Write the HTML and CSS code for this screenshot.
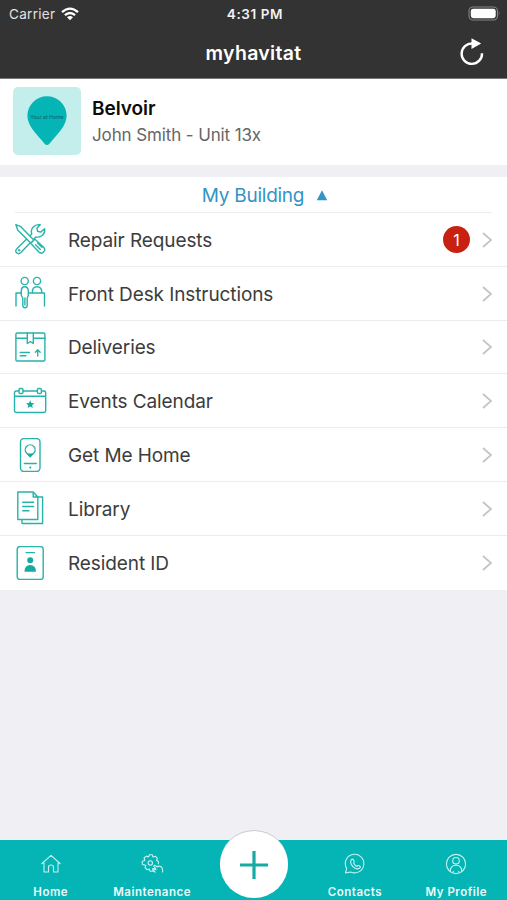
FILE: index.html
```html
<!DOCTYPE html>
<html lang="en">
<head>
<meta charset="utf-8">
<title>myhavitat</title>
<link rel="stylesheet" href="styles.css">
</head>
<body>
<div class="app">
  <header class="header">
    <div class="status">
      <div class="carrier"><span>Carrier</span>
        <svg class="wifi" width="18" height="14" viewBox="0 0 18 14"><g fill="none" stroke="#fff" stroke-width="2.3"><path d="M1 5.2Q9-2 17 5.2"/><path d="M3.9 8.2Q9 3.7 14.1 8.2"/></g><path fill="#fff" d="M6 10.2Q9 7.7 12 10.2L9 13.2Z"/></svg>
      </div>
      <span class="time">4:31 PM</span>
      <svg class="battery" width="33" height="16" viewBox="0 0 33 16"><rect x="1" y="1" width="28.5" height="13" rx="4" fill="none" stroke="#858585" stroke-width="1.1"/><rect x="2.8" y="2.8" width="24.9" height="9.4" rx="2.4" fill="#fff"/><path d="M30.8 5.3q1.7 2.2 0 4.4z" fill="#858585"/></svg>
    </div>
    <div class="titlebar">
      <h1>myhavitat</h1>
      <svg class="refresh" width="26" height="30" viewBox="0 0 26 30"><path d="M13.5 5.500A10.200 10.200 0 1 0 23 15.200" fill="none" stroke="#fff" stroke-width="2.400"/><path d="M12.500.2 22.200 5.500 12.500 11z" fill="#fff"/></svg>
    </div>
  </header>

  <section class="profile">
    <div class="avatar">
      <svg width="40" height="50" viewBox="0 0 40 50"><path d="M20 49C18.500 49 16.800 47 14.500 44 8 36.500.4 29 .4 19.800A19.600 19.600 0 0 1 39.600 19.800C39.600 29 32 36.500 25.500 44 23.200 47 21.500 49 20 49Z" fill="#05b4b5"/><text class="pin-label" x="20" y="23" text-anchor="middle">Your at Home</text></svg>
    </div>
    <div class="who"><h2>Belvoir</h2><p>John Smith - Unit 13x</p></div>
  </section>

  <main class="building">
    <div class="section-title"><span>My Building</span><svg width="12" height="11" viewBox="0 0 12 11"><path d="M6 .3 11.200 10.300H.8z" fill="#3294c5"/></svg></div>
    <ul class="list">
      <li class="row">
        <svg class="icon" viewBox="0 0 34 34"><g fill="#fff"><path d="M18.900 19.900 21.700 17.100 30.600 25.200C33.700 28.700 29 33.200 25.600 29.800L17.600 21.300Z"/><path d="M22.500 22.800 27.300 27.600M24.600 20.900 29 25.300"/><path d="M14.700 15.900 18.700 11.900C17.200 6.500 21.500 1.900 27.200 2.700L23.900 6.200 24.600 9.300 27.800 10.100 31.600 6.700C32.500 12 28 16 22.800 14.900L7.900 30.500C4.800 33.500.8 29.600 3.900 26.700Z"/><path d="M2.800 2.600 7.800 4.700 20.800 18 17.700 21.100 4.700 7.900Z"/></g><circle cx="6.200" cy="28.300" r=".5"/></svg>
        <span class="label">Repair Requests</span><span class="badge">1</span><svg class="chevron" viewBox="0 0 10 16"><path d="m1 1 8 7-8 7"/></svg>
      </li>
      <li class="row">
        <svg class="icon" viewBox="0 0 34 34"><circle cx="11.700" cy="5" r="3.600"/><circle cx="24" cy="5" r="3.600"/><path d="M8.300 17.500V15Q8.300 10.800 11.700 10.800T15.300 15V19.500L14.200 22V29.700Q14 31.700 12 31.700T9.800 29.700V22L8.300 19.500ZM11.900 22V29M8.300 17H3V30M15.300 17H31.500V30M19.500 16.500Q19 10.800 24 10.800T28.700 16.500"/></svg>
        <span class="label">Front Desk Instructions</span><svg class="chevron" viewBox="0 0 10 16"><path d="m1 1 8 7-8 7"/></svg>
      </li>
      <li class="row">
        <svg class="icon" viewBox="0 0 34 34"><rect x="2.900" y="3" width="29" height="28" rx="1.200"/><path d="M3 8.200H14.300M20.300 8.200H32M14.300 3V13.500L17.300 11.500 20.300 13.500V3M7.200 22.500H16.500M7.200 25.800H13M24.700 26V20M22.400 22.300 24.700 19.700 27.200 22.300"/></svg>
        <span class="label">Deliveries</span><svg class="chevron" viewBox="0 0 10 16"><path d="m1 1 8 7-8 7"/></svg>
      </li>
      <li class="row">
        <svg class="icon" viewBox="0 0 34 34"><path d="M5.800 7H3.200Q1.500 7 1.500 8.700V26.800Q1.500 28.500 3.200 28.500H31Q32.700 28.500 32.700 26.800V8.700Q32.700 7 31 7H28.500M10 7H24.300M1.500 12.200H32.700"/><rect x="6" y="4.500" width="4" height="5" rx="1.300"/><rect x="24.400" y="4.500" width="4" height="5" rx="1.300"/><path class="solid" d="m17.200 16.200 1.200 2.700 3 .3-2.300 2 .7 2.900-2.600-1.500-2.600 1.500.7-2.900-2.300-2 3-.3z"/></svg>
        <span class="label">Events Calendar</span><svg class="chevron" viewBox="0 0 10 16"><path d="m1 1 8 7-8 7"/></svg>
      </li>
      <li class="row">
        <svg class="icon" viewBox="0 0 34 34"><rect x="7.500" y="0.500" width="19.500" height="33" rx="3.500"/><path d="M17.200 18.700 13.600 15.100A4.900 4.900 0 1 1 20.800 15.100ZM11.300 25.500H23.300"/><path class="solid" d="M14 15.500H20.400L17.200 19Z"/><circle class="solid" cx="17.300" cy="29.400" r="1"/></svg>
        <span class="label">Get Me Home</span><svg class="chevron" viewBox="0 0 10 16"><path d="m1 1 8 7-8 7"/></svg>
      </li>
      <li class="row">
        <svg class="icon" viewBox="0 0 34 34"><path d="M4.800 1H20.200L24.800 6V28.500H4.800ZM20.200 1V6H24.800M24.800 6H29.600V32.500H9V28.500M9.700 11.200H20.600M9.700 15.500H20.600M9.700 19.800H16"/></svg>
        <span class="label">Library</span><svg class="chevron" viewBox="0 0 10 16"><path d="m1 1 8 7-8 7"/></svg>
      </li>
      <li class="row">
        <svg class="icon" viewBox="0 0 34 34"><rect x="4.200" y="0.500" width="26" height="33" rx="2.800"/><path d="M13 6.600H21.500"/><circle class="solid" cx="17.200" cy="14.300" r="3"/><path class="solid" d="M11.500 25.800Q11.500 19 17.200 19T22.900 25.800Z"/></svg>
        <span class="label">Resident ID</span><svg class="chevron" viewBox="0 0 10 16"><path d="m1 1 8 7-8 7"/></svg>
      </li>
    </ul>
  </main>

  <nav class="tabs">
    <a class="tab"><svg viewBox="0 0 24 24"><path d="M2.500 12 12 3.300 21.500 12M5 10.800V20H9.500V15Q9.500 13 12 13T14.500 15V20H19V10.800"/></svg><span>Home</span></a>
    <a class="tab"><svg viewBox="0 0 24 24"><path d="M16 16.200 14.300 17.100 13.600 19.200H10.100L9.300 17 7.300 17.800 5 15.500 5.900 13.400 2.300 12.500V9.300L4.800 8.500 4.100 6 6.300 4.100 8.500 5 9.400 2.800H12.300L13 5 15.300 4.200 17.400 6.300 16.500 8.500 18.400 9.300V12.300"/><circle cx="10.300" cy="10.900" r="2.200"/><path d="M15.500 20.500 12.500 17.800Q12.300 16.300 14 16.700L16 17.800 13.800 13.900Q14.500 12.700 16 14L17.300 15Q18.500 13.500 20.800 14.500 23.300 16.300 22.500 20.500"/></svg><span>Maintenance</span></a>
    <span class="tab-space"></span>
    <a class="tab"><svg viewBox="0 0 24 24"><path d="M2.500 21 3.700 16.500A9.300 9.300 0 1 1 7.700 20Z"/><path d="M8.500 7.500Q10 6.300 10.800 8.500T10.600 11Q12 13.700 13.900 14.400 15 12.700 16.600 14T16.400 16.300Q13 18 9.700 14.400 6.300 10.500 8.500 7.500Z"/></svg><span>Contacts</span></a>
    <a class="tab"><svg viewBox="0 0 24 24"><circle cx="12" cy="12" r="9.600"/><circle cx="12" cy="8.800" r="3.300"/><path d="M6.200 19.400Q6.300 13.200 12 13.200T17.800 19.400M9.200 19V20.800M14.800 19V20.800"/></svg><span>My Profile</span></a>
    <button class="add" aria-label="Add"><svg width="30" height="30" viewBox="0 0 30 30"><path d="M15 1V29M1 15H29" stroke="#16aaa2" stroke-width="3.200"/></svg></button>
  </nav>
</div>
</body>
</html>
```
FILE: styles.css
```css
* { box-sizing: border-box; }
body { margin: 0; font-family: Inter, "Liberation Sans", sans-serif; }
h1, h2, p, ul { margin: 0; padding: 0; }
svg { display: block; flex: none; }
.app { width: 507px; height: 900px; display: flex; flex-direction: column; background: #efeff4; overflow: hidden; }

.header { height: 79px; background: #333; color: #fff; border-bottom: 1px solid #777; }
.status { height: 28px; display: grid; grid-template-columns: 1fr auto 1fr; align-items: center; padding: 0 6px 0 9px; }
.carrier { display: flex; align-items: center; gap: 6px; font-size: 13.5px; letter-spacing: 0.3px; color: #e2e2e2; }
.time { font-size: 13.5px; font-weight: 600; letter-spacing: 0.6px; color: #f2f2f2; }
.battery { justify-self: end; }
.titlebar { height: 50px; display: grid; grid-template-columns: 1fr auto 1fr; align-items: center; padding: 0 22px 1px; }
.titlebar h1 { grid-column: 2; font-size: 19.5px; line-height: 24px; font-weight: 600; letter-spacing: 0.3px; }
.refresh { justify-self: end; }

.profile { height: 86px; display: flex; align-items: center; gap: 11px; padding: 0 13px 3px; background: #fff; }
.avatar { width: 68px; height: 68px; border-radius: 5px; background: #c4eeec; display: flex; align-items: center; justify-content: center; }
.avatar svg { margin-right: 1px; }
.pin-label { font-size: 5.2px; fill: #075f69; }
.who { padding-top: 4px; }
.who h2 { font-size: 19px; line-height: 26px; font-weight: 600; color: #0c0c0c; letter-spacing: -0.05px; }
.who p { font-size: 17px; line-height: 27px; color: #666; letter-spacing: -0.12px; }

.building { margin-top: 12px; background: #fff; }
.section-title { height: 36px; margin: 0 15px; border-bottom: 1px solid #ececee; display: flex; justify-content: center; align-items: center; gap: 12px; padding: 1px 0 0 23px; font-size: 19px; letter-spacing: -0.25px; color: #3294c5; }
.list { list-style: none; }
.row { height: 53.8px; display: flex; align-items: center; padding: 0 15px 0 13px; border-bottom: 1px solid #ececee; }
.row:last-child { border-bottom: 0; }
.icon { width: 34px; height: 34px; margin-right: 21px; fill: none; stroke: #27b3aa; stroke-width: 1.4; stroke-linejoin: round; stroke-linecap: round; }
.solid { fill: #16aaa2; stroke: none; }
.label { flex: 1; padding-top: 2px; font-size: 19px; letter-spacing: -0.1px; color: #3c3c3c; }
.badge { width: 27px; height: 27px; margin: 1px 12px 0 0; border-radius: 50%; background: #c82112; color: #fff; font-size: 16px; display: flex; align-items: center; justify-content: center; }
.chevron { width: 10px; height: 16px; margin-top: 1px; fill: none; stroke: #c4c4c8; stroke-width: 1.8; }

.tabs { position: relative; height: 60px; margin-top: auto; background: #05b4b5; display: grid; grid-template-columns: repeat(5, 1fr); }
.tab { display: flex; flex-direction: column; align-items: center; padding-top: 12px; color: #ecfbfa; font-size: 11.5px; line-height: 16px; font-weight: 600; letter-spacing: 0.5px; white-space: nowrap; }
.tab svg { width: 24px; height: 24px; margin-bottom: 8px; fill: none; stroke: #c4f3ef; stroke-width: 1.1; stroke-linejoin: round; }
.add { position: absolute; left: 220px; top: -9px; width: 68px; height: 67px; padding: 0; border: 0; border-radius: 50%; background: #fff; box-shadow: 0 -1px 0 #c9cccf; display: flex; align-items: center; justify-content: center; }
```
